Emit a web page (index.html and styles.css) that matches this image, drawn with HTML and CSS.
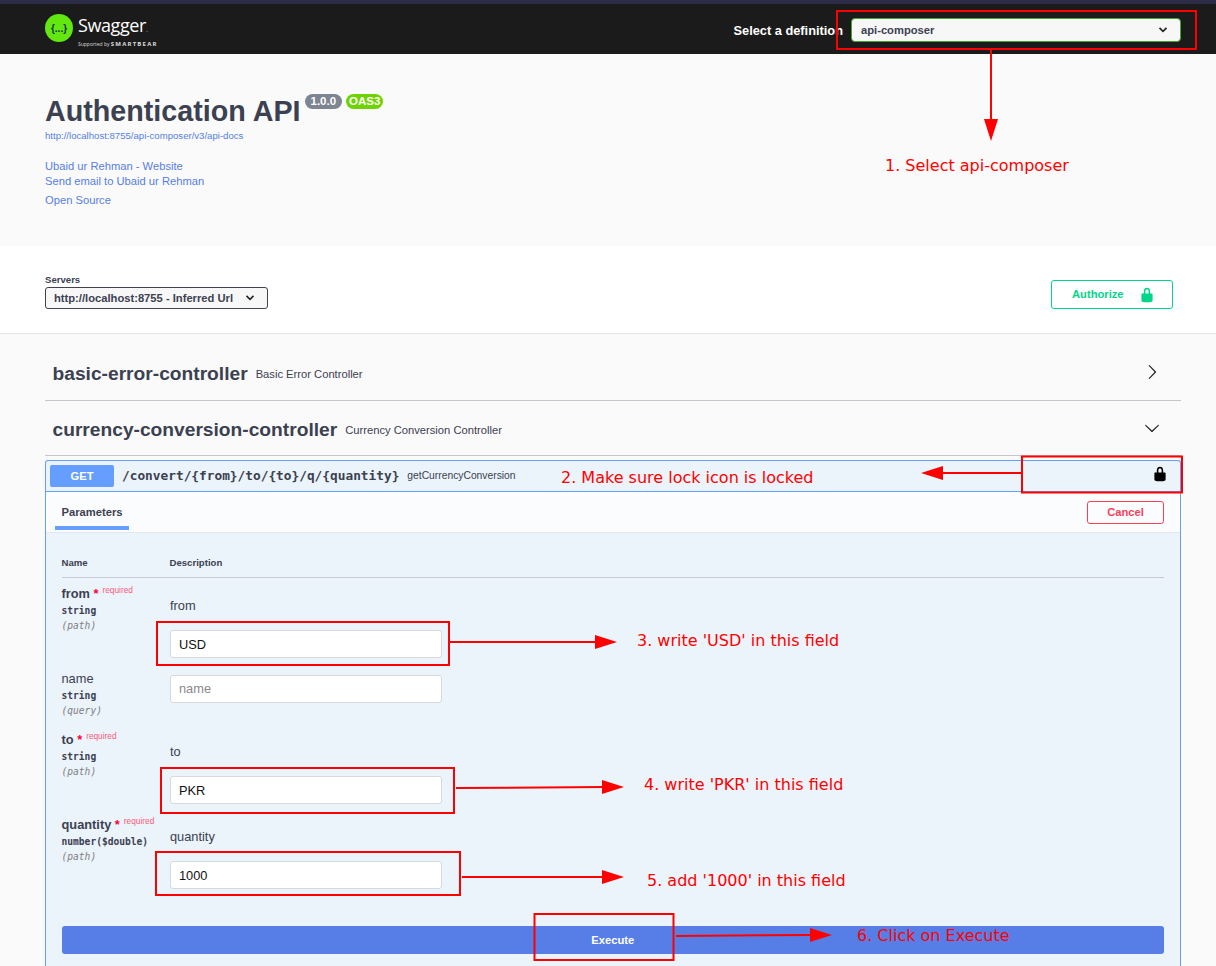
FILE: index.html
```html
<!DOCTYPE html>
<html lang="en">
<head>
    <meta charset="UTF-8">
    <meta name="viewport" content="width=device-width, initial-scale=1.0">
    <title>Swagger UI</title>
    <link rel="stylesheet" href="styles.css">
</head>
<body>
    <header class="topbar">
        <div class="logo">
            <svg class="logo-mark" viewBox="0 0 28 28"><circle cx="14" cy="14" r="14" fill="#62e70f"/><text x="14" y="17.5" text-anchor="middle" class="logo-braces">{...}</text></svg>
            <div class="logo-text">
                <span class="logo-name">Swagger<small>.</small></span>
                <span class="logo-sub">Supported by <b>SMARTBEAR</b></span>
            </div>
        </div>
        <div class="definition">
            <span class="definition-label">Select a definition</span>
            <div class="definition-select">
                <span>api-composer</span>
                <svg class="select-arrow" viewBox="0 0 20 20"><path d="M5 7l5 5 5-5" fill="none" stroke="#222" stroke-width="2.4"/></svg>
            </div>
        </div>
    </header>

    <section class="info">
        <div class="title-row">
            <h1>Authentication API</h1>
            <span class="badge badge-version">1.0.0</span>
            <span class="badge badge-oas">OAS3</span>
        </div>
        <a class="spec-url" href="#">http://localhost:8755/api-composer/v3/api-docs</a>
        <a class="info-link first" href="#">Ubaid ur Rehman - Website</a>
        <a class="info-link" href="#">Send email to Ubaid ur Rehman</a>
        <a class="info-link license" href="#">Open Source</a>
    </section>

    <section class="servers">
        <div>
            <div class="servers-label">Servers</div>
            <div class="servers-select">
                <span>http://localhost:8755 - Inferred Url</span>
                <svg class="select-arrow" viewBox="0 0 20 20"><path d="M5 7l5 5 5-5" fill="none" stroke="#222" stroke-width="2.2"/></svg>
            </div>
        </div>
        <button class="btn-authorize">
            <span>Authorize</span>
            <svg class="lock" viewBox="0 0 20 20"><path d="M15.8 8H14V5.6C14 2.703 12.665 1 10 1 7.334 1 6 2.703 6 5.6V8H4c-.553 0-1 .646-1 1.199V17c0 .549.428 1.139.951 1.307l1.197.387C5.672 18.861 6.55 19 7.1 19h5.8c.549 0 1.428-.139 1.951-.307l1.196-.387c.524-.167.953-.757.953-1.306V9.199C17 8.646 16.352 8 15.8 8zM12 8H8V5.199C8 3.754 8.797 3 10 3c1.203 0 2 .754 2 2.199V8z"/></svg>
        </button>
    </section>

    <main class="wrapper">
        <div class="tag tag-first">
            <h3>basic-error-controller</h3>
            <small>Basic Error Controller</small>
            <svg class="tag-arrow" viewBox="0 0 20 20"><path d="M13.25 10L6.109 2.58a.697.697 0 0 1 0-.979.68.68 0 0 1 .969 0l7.83 7.908a.697.697 0 0 1 0 .979l-7.83 7.908a.68.68 0 0 1-.969 0 .697.697 0 0 1 0-.979L13.25 10z"/></svg>
        </div>
        <div class="tag">
            <h3>currency-conversion-controller</h3>
            <small>Currency Conversion Controller</small>
            <svg class="tag-arrow" viewBox="0 0 20 20"><path d="M17.418 6.109c.272-.268.709-.268.979 0s.271.701 0 .969l-7.908 7.83c-.27.268-.707.268-.979 0l-7.908-7.83c-.27-.268-.27-.701 0-.969.271-.268.709-.268.979 0L10 13.25l7.418-7.141z"/></svg>
        </div>

        <div class="opblock">
            <div class="op-summary">
                <span class="op-method">GET</span>
                <span class="op-path">/convert/{from}/to/{to}/q/{quantity}</span>
                <span class="op-id">getCurrencyConversion</span>
                <svg class="op-lock" viewBox="0 0 20 20"><path d="M15.8 8H14V5.6C14 2.703 12.665 1 10 1 7.334 1 6 2.703 6 5.6V8H4c-.553 0-1 .646-1 1.199V17c0 .549.428 1.139.951 1.307l1.197.387C5.672 18.861 6.55 19 7.1 19h5.8c.549 0 1.428-.139 1.951-.307l1.196-.387c.524-.167.953-.757.953-1.306V9.199C17 8.646 16.352 8 15.8 8zM12 8H8V5.199C8 3.754 8.797 3 10 3c1.203 0 2 .754 2 2.199V8z"/></svg>
            </div>
            <div class="op-tabs">
                <span class="tab-active">Parameters</span>
                <button class="btn-cancel">Cancel</button>
            </div>
            <div class="params">
                <div class="params-head">
                    <span>Name</span>
                    <span>Description</span>
                </div>

                <div class="param-row">
                    <div>
                        <div class="param-name">from <span class="star">*</span><span class="req">required</span></div>
                        <div class="param-type">string</div>
                        <div class="param-in">(path)</div>
                    </div>
                    <div>
                        <p class="param-desc">from</p>
                        <input class="param-input" type="text" value="USD">
                    </div>
                </div>

                <div class="param-row">
                    <div>
                        <div class="param-name param-optional">name</div>
                        <div class="param-type">string</div>
                        <div class="param-in">(query)</div>
                    </div>
                    <div>
                        <input class="param-input no-desc" type="text" placeholder="name">
                    </div>
                </div>

                <div class="param-row">
                    <div>
                        <div class="param-name">to <span class="star">*</span><span class="req">required</span></div>
                        <div class="param-type">string</div>
                        <div class="param-in">(path)</div>
                    </div>
                    <div>
                        <p class="param-desc">to</p>
                        <input class="param-input" type="text" value="PKR">
                    </div>
                </div>

                <div class="param-row">
                    <div>
                        <div class="param-name">quantity <span class="star">*</span><span class="req">required</span></div>
                        <div class="param-type">number<span class="param-format">($double)</span></div>
                        <div class="param-in">(path)</div>
                    </div>
                    <div>
                        <p class="param-desc">quantity</p>
                        <input class="param-input" type="text" value="1000">
                    </div>
                </div>

                <button class="btn-execute">Execute</button>
            </div>
        </div>
    </main>

    <!-- red notes drawn on top of the screenshot -->
    <svg class="notes" viewBox="0 0 1216 966">
        <g class="note-box">
            <rect x="837" y="11" width="359" height="38"/>
            <rect x="1022" y="456.5" width="160" height="36"/>
            <rect x="157" y="622" width="292" height="43"/>
            <rect x="161" y="768" width="293" height="45"/>
            <rect x="156" y="852" width="304" height="43"/>
            <rect x="534.5" y="914" width="139" height="46"/>
        </g>
        <g class="note-line">
            <line x1="991" y1="49" x2="991" y2="122"/>
            <line x1="1022" y1="473" x2="942" y2="473"/>
            <line x1="449" y1="642" x2="597" y2="642"/>
            <line x1="456" y1="788" x2="604" y2="787"/>
            <line x1="462" y1="877" x2="604" y2="877"/>
            <line x1="676" y1="936" x2="811" y2="935"/>
        </g>
        <g class="note-head">
            <polygon points="984,119 998,119 991,141"/>
            <polygon points="943,466 943,480 921,473"/>
            <polygon points="595,635 595,649 617,642"/>
            <polygon points="602,780 602,794 624,787"/>
            <polygon points="602,870 602,884 624,877"/>
            <polygon points="810,928 810,942 832,935"/>
        </g>
        <g class="note-text">
            <text x="885" y="171">1. Select api-composer</text>
            <text x="561" y="483">2. Make sure lock icon is locked</text>
            <text x="637" y="646">3. write 'USD' in this field</text>
            <text x="644" y="790">4. write 'PKR' in this field</text>
            <text x="647" y="886">5. add '1000' in this field</text>
            <text x="857" y="941">6. Click on Execute</text>
        </g>
    </svg>
</body>
</html>
```

FILE: styles.css
```css
* {
    box-sizing: border-box;
}
html, body {
    height: 966px;
    overflow: hidden;
}
body {
    position: relative;
    margin: 0;
    font-family: "Liberation Sans", Arial, sans-serif;
    color: #3b4151;
    background-color: #fafafa;
}

/* top bar */
.topbar {
    height: 54px;
    display: flex;
    align-items: center;
    justify-content: space-between;
    padding: 0 35px 0 45px;
    background-color: #1b1b1b;
    border-top: 4px solid #2c2c48;
}
.logo {
    display: flex;
    align-items: center;
    gap: 5px;
    margin-top: -2px;
}
.logo-mark {
    width: 28px;
    height: 28px;
}
.logo-braces {
    font-family: "Liberation Sans", sans-serif;
    font-size: 10px;
    font-weight: bold;
    fill: #173646;
}
.logo-text {
    display: flex;
    flex-direction: column;
    color: #fff;
    margin-top: 6px;
}
.logo-name {
    font-family: "Open Sans", sans-serif;
    font-size: 18px;
    line-height: 22px;
    letter-spacing: -0.4px;
}
.logo-name small {
    font-size: 8px;
    color: #999;
}
.logo-sub {
    font-family: "Open Sans", sans-serif;
    font-size: 5px;
    line-height: 8px;
    color: #ddd;
}
.logo-sub b {
    font-size: 6px;
    letter-spacing: 1.2px;
}
.definition {
    display: flex;
    align-items: center;
    gap: 8px;
    margin-top: 2px;
}
.definition-label {
    font-size: 12.8px;
    font-weight: bold;
    color: #fff;
}
.definition-select {
    width: 330px;
    height: 24px;
    display: flex;
    align-items: center;
    justify-content: space-between;
    padding: 0 10px 0 9px;
    font-size: 11.2px;
    font-weight: bold;
    background-color: #f7f7f7;
    border: 1px solid #41a62a;
    border-radius: 4px;
}
.select-arrow {
    width: 14px;
    height: 14px;
}

/* info block */
.info {
    height: 192px;
    padding: 41px 45px 0;
    background-color: #fafafa;
}
.title-row {
    display: flex;
    align-items: flex-start;
    height: 35px;
}
h1 {
    margin: 0;
    font-size: 28.7px;
    line-height: 32px;
    color: #3b4151;
}
.badge {
    margin-top: -1px;
    font-size: 11.5px;
    font-weight: bold;
    line-height: 15px;
    color: #fff;
    border-radius: 8px;
}
.badge-version {
    margin-left: 4px;
    padding: 0 6px;
    background-color: #7d8492;
}
.badge-oas {
    margin-left: 4px;
    padding: 0 3px;
    background-color: #6ed400;
}
a {
    display: block;
    color: #567ee6;
    text-decoration: none;
}
.spec-url {
    font-size: 9.6px;
    line-height: 12px;
}
.info-link {
    font-size: 11.2px;
    line-height: 15px;
}
.info-link.first {
    margin-top: 17px;
}
.info-link.license {
    margin-top: 4px;
}

/* servers */
.servers {
    height: 88px;
    display: flex;
    justify-content: space-between;
    align-items: flex-start;
    padding: 29px 43px 0 45px;
    background-color: #fff;
    border-bottom: 1px solid #e4e4e4;
}
.servers-label {
    font-size: 9.6px;
    font-weight: bold;
    line-height: 10px;
}
.servers-select {
    width: 223px;
    height: 22px;
    margin-top: 2px;
    display: flex;
    align-items: center;
    justify-content: space-between;
    padding: 0 10px 0 8px;
    font-size: 11.2px;
    font-weight: bold;
    background-color: #f7f7f7;
    border: 1px solid #41444e;
    border-radius: 3px;
}
.btn-authorize {
    width: 122px;
    height: 29px;
    margin-top: 5px;
    display: flex;
    align-items: center;
    gap: 15px;
    padding: 0 0 0 20px;
    font-family: inherit;
    font-size: 11.2px;
    font-weight: bold;
    color: #00d689;
    background: transparent;
    border: 1px solid #00d689;
    border-radius: 3px;
}
.btn-authorize span {
    margin-top: -2px;
}
.lock {
    width: 16px;
    height: 16px;
    fill: #00d689;
}

/* tags */
.wrapper {
    padding: 0 35px 0 45px;
}
.tag {
    height: 55px;
    display: flex;
    align-items: center;
    gap: 8px;
    padding: 1px 21px 0 7.5px;
    border-bottom: 1px solid #c5c6cb;
}
.tag-first {
    height: 67px;
    padding-top: 11px;
}
.tag h3 {
    margin: 2px 0 0;
    font-size: 19.2px;
    color: #3b4151;
}
.tag small {
    margin-top: 2px;
    font-size: 11.2px;
}
.tag-arrow {
    width: 16px;
    height: 16px;
    margin-left: auto;
    margin-top: -2px;
    fill: #222;
}

/* operation */
.opblock {
    margin-top: 4px;
    background-color: #ebf3fb;
    border: 1px solid #659eff;
    border-bottom: 0;
    border-radius: 3px 3px 0 0;
}
.op-summary {
    height: 31px;
    display: flex;
    align-items: center;
    padding: 0 12px 0 4px;
    border-bottom: 1px solid #659eff;
}
.op-method {
    width: 64px;
    height: 22px;
    font-size: 11.2px;
    font-weight: bold;
    line-height: 22px;
    text-align: center;
    color: #fff;
    background-color: #659eff;
    border-radius: 2px;
}
.op-path {
    margin: -2px 0 0 8px;
    font-family: "DejaVu Sans Mono", monospace;
    font-size: 12.8px;
    font-weight: bold;
}
.op-id {
    margin: -2px 0 0 8px;
    font-size: 10.3px;
}
.op-lock {
    width: 16px;
    height: 16px;
    margin-left: auto;
    margin-top: -4px;
    fill: #000;
}
.op-tabs {
    height: 41px;
    display: flex;
    align-items: center;
    justify-content: space-between;
    padding: 0 16px 0 9px;
    background-color: #fbfcfe;
    border-bottom: 1px solid #e3e7f0;
}
.tab-active {
    align-self: flex-end;
    width: 74px;
    height: 34px;
    margin-bottom: 2px;
    padding-top: 10px;
    font-size: 11.2px;
    font-weight: bold;
    text-align: center;
    border-bottom: 4px solid #659eff;
}
.btn-cancel {
    width: 77px;
    height: 23px;
    font-family: inherit;
    font-size: 11.2px;
    font-weight: bold;
    color: #ff3f5a;
    background: transparent;
    border: 1px solid #ff3f5a;
    border-radius: 3px;
}
.params {
    padding: 0 16px 40px 15.5px;
}
.params-head {
    height: 45px;
    display: grid;
    grid-template-columns: 108px 1fr;
    align-items: end;
    padding-bottom: 9px;
    margin-bottom: 8px;
    font-size: 9.6px;
    font-weight: bold;
    border-bottom: 1px solid #c7cad6;
}
.param-row {
    min-height: 61px;
    display: grid;
    grid-template-columns: 108.5px 1fr;
    padding-bottom: 13px;
}
.param-name {
    padding-top: 1px;
    font-size: 12.8px;
    font-weight: bold;
    line-height: 14px;
}
.param-optional {
    font-weight: normal;
}
.star {
    color: #ff0033;
    font-weight: bold;
}
.req {
    position: relative;
    top: -5px;
    margin-left: 4px;
    font-size: 8.3px;
    font-weight: normal;
    line-height: 0;
    color: #ff5a78;
}
.param-type,
.param-in {
    font-family: "DejaVu Sans Mono", monospace;
    font-size: 9.6px;
    line-height: 15px;
}
.param-type {
    font-weight: bold;
    margin-top: 2px;
}
.param-format {
    font-weight: 600;
}
.param-in {
    font-style: italic;
    color: #808080;
}
.param-desc {
    margin: 12px 0 16px;
    font-size: 12.8px;
    line-height: 16px;
}
.param-input {
    display: block;
    width: 272px;
    height: 28px;
    padding: 0 8px;
    font-family: inherit;
    font-size: 12.8px;
    color: #111;
    background-color: #fff;
    border: 1px solid #d9d9d9;
    border-radius: 3px;
}
.param-input::placeholder {
    color: #8a8a8a;
}
.no-desc {
    margin-top: 4px;
    padding-bottom: 1px;
}
.btn-execute {
    display: block;
    width: 100%;
    height: 28px;
    margin-top: 24px;
    font-family: inherit;
    font-size: 11.2px;
    font-weight: bold;
    color: #fff;
    background-color: #567ee6;
    border: 0;
    border-radius: 3px;
}

/* annotation layer */
.notes {
    position: absolute;
    top: 0;
    left: 0;
    width: 1216px;
    height: 966px;
}
.note-box rect {
    fill: none;
    stroke: #f00;
    stroke-width: 2;
}
.note-line line {
    stroke: #f00;
    stroke-width: 2;
}
.note-head polygon {
    fill: #f00;
}
.note-text text {
    font-family: "DejaVu Sans", sans-serif;
    font-size: 16px;
    fill: #f00;
}
```
